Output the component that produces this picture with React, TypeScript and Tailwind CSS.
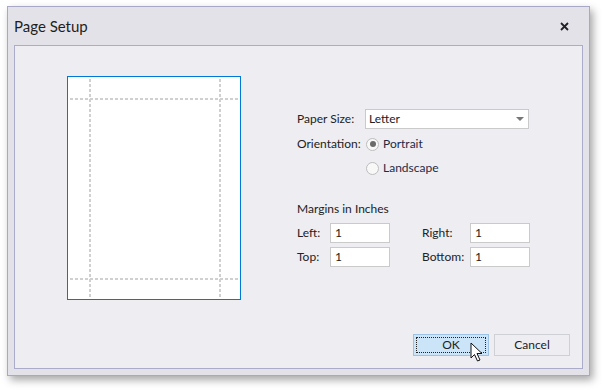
const font = { fontFamily: 'Lato, "Open Sans", sans-serif' };

function PagePreview() {
    return (
        <div className="relative h-[224px] w-[174px] border border-[#0078d7] bg-white">
            <svg className="absolute inset-0" width="172" height="222">
                <g stroke="#d0d0d0" strokeWidth="2" strokeDasharray="3 2">
                    <line x1="22" y1="2" x2="22" y2="222" />
                    <line x1="152" y1="2" x2="152" y2="222" />
                    <line x1="2" y1="22" x2="172" y2="22" />
                    <line x1="2" y1="202" x2="172" y2="202" />
                </g>
            </svg>
        </div>
    );
}

function Radio({ checked, label }: { checked?: boolean; label: string }) {
    return (
        <div className="flex h-5 items-center">
            <span className="flex h-[13px] w-[13px] items-center justify-center rounded-full border border-[#bdbdbd] bg-[#f8f8f8]">
                {checked && <span className="h-[6px] w-[6px] rounded-full bg-[#6b6b6b]" />}
            </span>
            <span className="ml-[4px] text-[12px] text-[#1f2a44]">{label}</span>
        </div>
    );
}

function Field({ label, labelWidth }: { label: string; labelWidth: string }) {
    return (
        <div className="flex h-5 items-center">
            <span className={`${labelWidth} text-[12px] text-[#222]`}>{label}</span>
            <div className="flex h-5 w-[60px] items-center border border-[#cacaca] bg-white pl-[4px] text-[12px] text-[#222]">1</div>
        </div>
    );
}

export default function App() {
    return (
        <div className="h-[390px] w-[602px] bg-white pl-[7px] pt-[6px]" style={font}>
            <div className="flex h-[370px] w-[583px] flex-col border border-[#a6a8c6] bg-[#e3e2e8] shadow-[3px_4px_8px_rgba(0,0,0,0.35)]">
                <div className="flex h-[38px] items-center justify-between pl-[6px] pr-[20px]">
                    <span className="text-[15px] text-[#1e1e1e]">Page Setup</span>
                    <svg width="9" height="9" viewBox="0 0 9 9">
                        <path d="M1 1L8 8M8 1L1 8" stroke="#222" strokeWidth="1.8" />
                    </svg>
                </div>
                <div className="mx-[6px] mb-[6px] flex flex-1 flex-col border border-[#aaacc9] bg-[#eeedf2]">
                    <div className="flex">
                        <div className="ml-[52px] mt-[30px]">
                            <PagePreview />
                        </div>
                        <div className="ml-[56px] mt-[63px] flex flex-col">
                            <div className="flex h-5 items-center">
                                <span className="w-[68px] text-[12px] text-[#222]">Paper Size:</span>
                                <div className="flex h-5 w-[164px] items-center justify-between border border-[#cacaca] bg-white pl-[3px] pr-[4px]">
                                    <span className="text-[12px] text-[#222]">Letter</span>
                                    <svg width="8" height="4" viewBox="0 0 8 4">
                                        <path d="M0 0H8L4 4Z" fill="#777" />
                                    </svg>
                                </div>
                            </div>
                            <div className="mt-[5px] flex h-5 items-center">
                                <span className="w-[69px] text-[12px] text-[#222]">Orientation:</span>
                                <Radio checked label="Portrait" />
                            </div>
                            <div className="ml-[69px] mt-[4px]">
                                <Radio label="Landscape" />
                            </div>
                            <div className="mt-[21px] flex h-5 items-center text-[12px] text-[#222]">Margins in Inches</div>
                            <div className="mt-[4px] flex">
                                <Field label="Left:" labelWidth="w-[33px]" />
                                <div className="ml-[32px]">
                                    <Field label="Right:" labelWidth="w-[48px]" />
                                </div>
                            </div>
                            <div className="mt-[4px] flex">
                                <Field label="Top:" labelWidth="w-[33px]" />
                                <div className="ml-[32px]">
                                    <Field label="Bottom:" labelWidth="w-[48px]" />
                                </div>
                            </div>
                        </div>
                    </div>
                    <div className="mt-auto flex justify-end gap-[5px] pb-[12px] pr-[12px]">
                        <div className="relative flex h-[22px] w-[76px] items-center justify-center border border-[#9cc3e5] bg-[#cce4f7] p-[2px]">
                            <div className="flex h-full w-full items-center justify-center border border-dotted border-[#222] text-[12px] text-[#222]">OK</div>
                            <svg className="absolute left-[56px] top-[7px]" width="14" height="21" viewBox="0 0 14 21">
                                <path d="M1 1V16L4.5 12.5L7.5 19L10 18L7 11.5H12Z" fill="#fff" stroke="#111" strokeWidth="1" strokeLinejoin="round" />
                            </svg>
                        </div>
                        <div className="flex h-[22px] w-[76px] items-center justify-center border border-[#cfcfd6] bg-[#eeedf2] text-[12px] text-[#222]">Cancel</div>
                    </div>
                </div>
            </div>
        </div>
    );
}
